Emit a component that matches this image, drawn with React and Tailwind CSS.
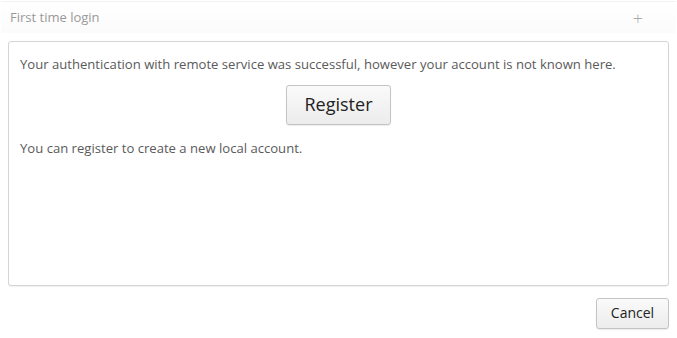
export default function App() {
  return (
    <div
      className="w-[677px] h-[338px] bg-white text-[#5a5a5a] overflow-hidden"
      style={{ fontFamily: '"Open Sans", "Noto Sans", sans-serif' }}
    >
      <div className="h-[32px] mx-[1px] mt-[1px] border-t border-[#f2f2f2] bg-gradient-to-b from-white to-[#fbfbfb] flex items-center justify-between pl-[9px] pr-[33px]">
        <span className="text-[13px] text-[#999]">First time login</span>
        <span className="text-[18px] text-[#aaa] font-light leading-none">+</span>
      </div>

      <div className="mx-[8px] mt-[8px] h-[245px] border border-[#d4d4d4] rounded-[3px] bg-white shadow-[0_1px_1px_rgba(0,0,0,0.06)] px-[11px] pt-[12px]">
        <p className="text-[13.1px] leading-[20px]">
          Your authentication with remote service was successful, however your account is not known here.
        </p>
        <div className="flex justify-center mt-[11px]">
          <button className="w-[105px] h-[40px] border border-[#c4c4c4] rounded-[3px] bg-gradient-to-b from-[#fafafa] to-[#ececec] shadow-[0_1px_1px_rgba(0,0,0,0.08)] text-[18px] leading-none pb-[3px] text-[#222]">
            Register
          </button>
        </div>
        <p className="text-[13.1px] leading-[20px] mt-[13px]">
          You can register to create a new local account.
        </p>
      </div>

      <div className="flex justify-end mx-[8px] mt-[12px]">
        <button className="w-[73px] h-[31px] border border-[#c4c4c4] rounded-[3px] bg-gradient-to-b from-[#fafafa] to-[#ececec] shadow-[0_1px_1px_rgba(0,0,0,0.08)] text-[14px] leading-none pb-[2px] text-[#222]">
          Cancel
        </button>
      </div>
    </div>
  );
}
